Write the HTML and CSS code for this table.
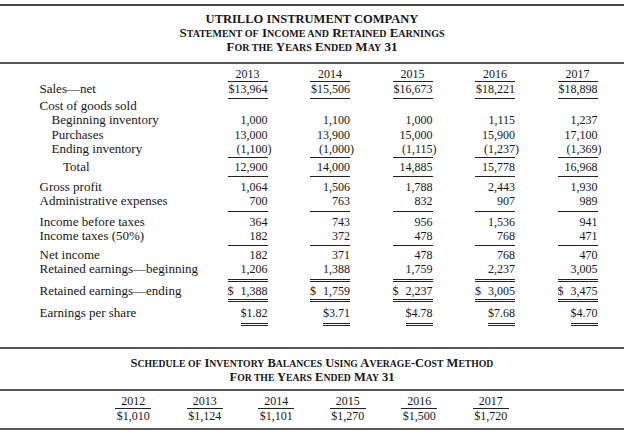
FILE: index.html
```html
<!DOCTYPE html>
<html lang="en">
<head>
<meta charset="utf-8">
<title>Utrillo Instrument Company</title>
<link rel="stylesheet" href="styles.css">
</head>
<body>
<div class="page">
  <header class="titles main-titles">
    <div class="t1">UTRILLO INSTRUMENT COMPANY</div>
    <div class="t2">S<span class="sc">tatement of</span> I<span class="sc">ncome and</span> R<span class="sc">etained</span> E<span class="sc">arnings</span></div>
    <div class="t2">F<span class="sc">or the</span> Y<span class="sc">ears</span> E<span class="sc">nded</span> M<span class="sc">ay</span> 31</div>
  </header>

  <section class="stmt">
    <div class="row head ul">
      <div class="lbl"></div>
      <div class="num c">2013</div><div class="num c">2014</div><div class="num c">2015</div><div class="num c">2016</div><div class="num c">2017</div>
    </div>
    <div class="row sales ul">
      <div class="lbl">Sales—net</div>
      <div class="num">$13,964</div><div class="num">$15,506</div><div class="num">$16,673</div><div class="num">$18,221</div><div class="num">$18,898</div>
    </div>
    <div class="row">
      <div class="lbl">Cost of goods sold</div>
      <div class="num"></div><div class="num"></div><div class="num"></div><div class="num"></div><div class="num"></div>
    </div>
    <div class="row">
      <div class="lbl ind1">Beginning inventory</div>
      <div class="num">1,000</div><div class="num">1,100</div><div class="num">1,000</div><div class="num">1,115</div><div class="num">1,237</div>
    </div>
    <div class="row">
      <div class="lbl ind1">Purchases</div>
      <div class="num">13,000</div><div class="num">13,900</div><div class="num">15,000</div><div class="num">15,900</div><div class="num">17,100</div>
    </div>
    <div class="row ul pb0">
      <div class="lbl ind1">Ending inventory</div>
      <div class="num">(1,100<span class="rp">)</span></div><div class="num">(1,000<span class="rp">)</span></div><div class="num">(1,115<span class="rp">)</span></div><div class="num">(1,237<span class="rp">)</span></div><div class="num">(1,369<span class="rp">)</span></div>
    </div>
    <div class="row ul total">
      <div class="lbl ind2">Total</div>
      <div class="num">12,900</div><div class="num">14,000</div><div class="num">14,885</div><div class="num">15,778</div><div class="num">16,968</div>
    </div>
    <div class="row gap3">
      <div class="lbl">Gross profit</div>
      <div class="num">1,064</div><div class="num">1,506</div><div class="num">1,788</div><div class="num">2,443</div><div class="num">1,930</div>
    </div>
    <div class="row ul pb2">
      <div class="lbl">Administrative expenses</div>
      <div class="num">700</div><div class="num">763</div><div class="num">832</div><div class="num">907</div><div class="num">989</div>
    </div>
    <div class="row gap3">
      <div class="lbl">Income before taxes</div>
      <div class="num">364</div><div class="num">743</div><div class="num">956</div><div class="num">1,536</div><div class="num">941</div>
    </div>
    <div class="row ul">
      <div class="lbl">Income taxes (50%)</div>
      <div class="num">182</div><div class="num">372</div><div class="num">478</div><div class="num">768</div><div class="num">471</div>
    </div>
    <div class="row gap2">
      <div class="lbl">Net income</div>
      <div class="num">182</div><div class="num">371</div><div class="num">478</div><div class="num">768</div><div class="num">470</div>
    </div>
    <div class="row dbl pb2">
      <div class="lbl">Retained earnings—beginning</div>
      <div class="num">1,206</div><div class="num">1,388</div><div class="num">1,759</div><div class="num">2,237</div><div class="num">3,005</div>
    </div>
    <div class="row dbl gap2">
      <div class="lbl">Retained earnings—ending</div>
      <div class="num split"><span>$</span><span>1,388</span></div><div class="num split"><span>$</span><span>1,759</span></div><div class="num split"><span>$</span><span>2,237</span></div><div class="num split"><span>$</span><span>3,005</span></div><div class="num split"><span>$</span><span>3,475</span></div>
    </div>
    <div class="row eps">
      <div class="lbl">Earnings per share</div>
      <div class="num"><span class="u2">$1.82</span></div><div class="num"><span class="u2">$3.71</span></div><div class="num"><span class="u2">$4.78</span></div><div class="num"><span class="u2">$7.68</span></div><div class="num"><span class="u2">$4.70</span></div>
    </div>
  </section>

  <header class="titles sched-titles">
    <div class="t2">S<span class="sc">chedule of</span> I<span class="sc">nventory</span> B<span class="sc">alances</span> U<span class="sc">sing</span> A<span class="sc">verage</span>-C<span class="sc">ost</span> M<span class="sc">ethod</span></div>
    <div class="t2">F<span class="sc">or the</span> Y<span class="sc">ears</span> E<span class="sc">nded</span> M<span class="sc">ay</span> 31</div>
  </header>

  <section class="sched">
    <div class="scol"><div class="syr">2012</div><div class="sval">$1,010</div></div>
    <div class="scol"><div class="syr">2013</div><div class="sval">$1,124</div></div>
    <div class="scol"><div class="syr">2014</div><div class="sval">$1,101</div></div>
    <div class="scol"><div class="syr">2015</div><div class="sval">$1,270</div></div>
    <div class="scol"><div class="syr">2016</div><div class="sval">$1,500</div></div>
    <div class="scol"><div class="syr">2017</div><div class="sval">$1,720</div></div>
  </section>
</div>
</body>
</html>
```

FILE: styles.css
```css
* { box-sizing: border-box; }

html, body {
  margin: 0;
  padding: 0;
  background: #ffffff;
}

body {
  font-family: "Liberation Serif", "Times New Roman", serif;
  color: #161616;
  width: 624px;
  height: 435px;
  overflow: hidden;
}

.page {
  padding-top: 4px;
}

/* title blocks */
.titles {
  text-align: center;
  font-weight: bold;
  line-height: 14px;
}

.main-titles {
  border-top: 2px solid #484848;
  border-bottom: 2px solid #585858;
  padding: 6px 0 8px;
}

.t1 {
  font-size: 12.5px;
  height: 14px;
}

.t2 {
  font-size: 13px;
  height: 14px;
}

.sc {
  text-transform: uppercase;
  font-size: 10px;
  line-height: 10px;
}

.sched-titles .t2 {
  font-size: 12.5px;
}

.sched-titles .sc {
  font-size: 9.7px;
}

.sched-titles {
  margin-top: 21px;
  border-top: 2px solid #585858;
  border-bottom: 2px solid #585858;
  padding: 7px 0 5px;
}

/* statement grid */
.stmt {
  padding-top: 3px;
  padding-left: 39.5px;
}

.row {
  display: grid;
  grid-template-columns: 145.5px repeat(5, 40px);
  column-gap: 42.5px;
  line-height: 14.5px;
}

.lbl {
  font-size: 13px;
  white-space: nowrap;
}

.ind1 { padding-left: 12px; }
.ind2 { padding-left: 23.5px; }

.num {
  font-size: 12px;
  text-align: right;
  white-space: nowrap;
}

.num.c { text-align: center; }

.rp { margin-right: -4px; }

.split {
  display: flex;
  justify-content: space-between;
}

.head { line-height: 14px; }

.ul .num {
  border-bottom: 1px solid #222222;
  padding-bottom: 1px;
}

.head.ul .num,
.pb0.ul .num { padding-bottom: 0; }

.total { padding-top: 2px; }
.total .num { padding-bottom: 1.5px; }

.pb2 .num { padding-bottom: 2px; }

.gap2 { padding-top: 2px; }
.gap3 { padding-top: 3px; }

.dbl .num {
  border-bottom: 3px double #222222;
  padding-bottom: 1px;
}

.dbl.pb2 .num { padding-bottom: 2px; }

.eps { padding-top: 4px; }

.u2 {
  display: inline-block;
  border-bottom: 3px double #222222;
  padding-bottom: 2px;
}

/* schedule */
.sched {
  display: grid;
  grid-template-columns: repeat(6, 36px);
  column-gap: 35.5px;
  justify-content: center;
  padding: 4px 0 5px;
  border-bottom: 2px solid #585858;
  font-size: 12px;
  text-align: center;
}

.syr {
  line-height: 13px;
  border-bottom: 1px solid #222222;
}

.sval {
  line-height: 14px;
}
```
